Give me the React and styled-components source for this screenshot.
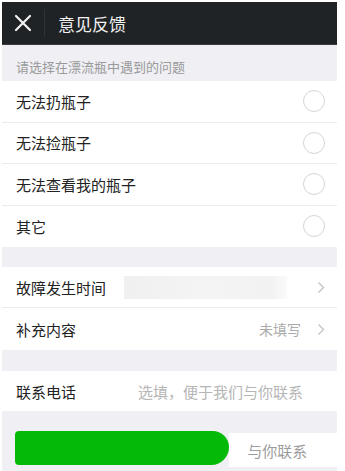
import React from "react";
import styled, { createGlobalStyle } from "styled-components";

const Global = createGlobalStyle`
  html, body { margin: 0; padding: 0; background: #fff; }
  body { font-family: "Noto Sans CJK SC", "Noto Sans", sans-serif; }
`;

const Frame = styled.div`
  width: 345px;
  height: 471px;
  box-sizing: border-box;
  padding: 2px 8px 0 2px;
  background: #fff;
  overflow: hidden;
`;

const Screen = styled.div`
  display: flex;
  flex-direction: column;
  background: #efeff4;
  height: 469px;
`;

const Header = styled.div`
  height: 42px;
  display: flex;
  align-items: center;
  background: #1f2326;
  border-bottom: 1px solid #3a3d40;
`;

const CloseBtn = styled.div`
  width: 42px;
  display: flex;
  justify-content: center;
  align-items: center;
`;

const Divider = styled.div`
  width: 1px;
  height: 28px;
  background: #2f3336;
`;

const Title = styled.div`
  color: #f2f2f2;
  font-size: 17px;
  margin-left: 13px;
`;

const SectionLabel = styled.div`
  height: 36px;
  box-sizing: border-box;
  padding: 13px 0 0 14px;
  font-size: 13px;
  line-height: 18px;
  color: #9a9a9a;
`;

const Group = styled.div`
  background: #fff;
  display: flex;
  flex-direction: column;
`;

const Row = styled.div`
  height: ${(p) => p.$h || 41.5}px;
  box-sizing: border-box;
  display: flex;
  align-items: center;
  padding: 0 12px 0 14px;
  border-bottom: ${(p) => (p.$last ? "none" : "1px solid #ececec")};
`;

const Label = styled.div`
  font-size: 15px;
  color: #222;
  flex: ${(p) => (p.$grow ? 1 : "none")};
`;

const Radio = styled.div`
  width: 20px;
  height: 20px;
  border-radius: 50%;
  border: 1px solid #d6d6d6;
`;

const Gap = styled.div`
  height: ${(p) => p.$h}px;
`;

const Blur = styled.div`
  flex: 1;
  height: 23px;
  margin: 0 30px 0 18px;
  background: linear-gradient(90deg, #f0f0f0, #f4f4f4 50%, #f2f2f2 90%, #fafafa);
`;

const Value = styled.div`
  font-size: 14px;
  color: #acacac;
  margin-right: 16px;
`;

const Placeholder = styled.div`
  font-size: 15px;
  color: #b5b5b5;
  margin-left: 62px;
`;

const Footer = styled.div`
  flex: 1;
  padding: 20px 0 0 13px;
  display: flex;
  align-items: flex-start;
`;

const GreenBtn = styled.div`
  width: 215px;
  height: 34px;
  background: #03bb07;
  border-radius: 5px 20px 22px 5px;
`;

const Smear = styled.div`
  margin-top: 2px;
  width: 90px;
  height: 34px;
  background: #fff;
  display: flex;
  align-items: center;
  padding-left: 18px;
  font-size: 15px;
  color: #9c9c9c;
`;

const Chevron = () => (
  <svg width="8" height="13" viewBox="0 0 8 13">
    <path d="M1.5 1.5 L6.5 6.5 L1.5 11.5" fill="none" stroke="#c4c4c4" strokeWidth="1.4" />
  </svg>
);

const options = ["无法扔瓶子", "无法捡瓶子", "无法查看我的瓶子", "其它"];

export default function App() {
  return (
    <>
      <Global />
      <Frame>
        <Screen>
          <Header>
            <CloseBtn>
              <svg width="18" height="18" viewBox="0 0 18 18">
                <path d="M2 2 L16 16 M16 2 L2 16" stroke="#f2f2f2" strokeWidth="2.2" strokeLinecap="round" />
              </svg>
            </CloseBtn>
            <Divider />
            <Title>意见反馈</Title>
          </Header>
          <SectionLabel>请选择在漂流瓶中遇到的问题</SectionLabel>
          <Group>
            {options.map((o, i) => (
              <Row key={o} $last={i === options.length - 1}>
                <Label $grow>{o}</Label>
                <Radio />
              </Row>
            ))}
          </Group>
          <Gap $h={20} />
          <Group>
            <Row $h={41}>
              <Label>故障发生时间</Label>
              <Blur />
              <Chevron />
            </Row>
            <Row $h={42} $last>
              <Label $grow>补充内容</Label>
              <Value>未填写</Value>
              <Chevron />
            </Row>
          </Group>
          <Gap $h={21} />
          <Group>
            <Row $h={40} $last>
              <Label>联系电话</Label>
              <Placeholder>选填，便于我们与你联系</Placeholder>
            </Row>
          </Group>
          <Footer>
            <GreenBtn />
            <Smear>与你联系</Smear>
          </Footer>
        </Screen>
      </Frame>
    </>
  );
}
